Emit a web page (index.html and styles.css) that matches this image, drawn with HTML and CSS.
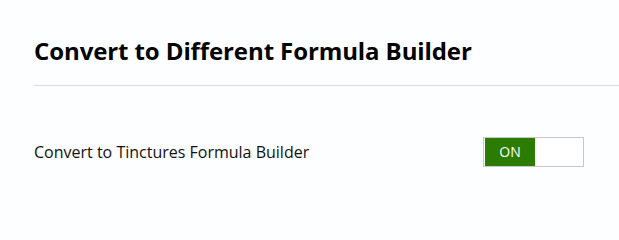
FILE: index.html
```html
<!DOCTYPE html>
<html>
<head>
<meta charset="utf-8">
<link rel="stylesheet" href="styles.css">
</head>
<body>
<div class="panel">
  <h2 class="title">Convert to Different Formula Builder</h2>
  <div class="divider"></div>
  <div class="row">
    <span class="label">Convert to Tinctures Formula Builder</span>
    <div class="toggle">
      <span class="toggle-on">ON</span>
      <span class="toggle-off"></span>
    </div>
  </div>
</div>
</body>
</html>
```
FILE: styles.css
```css
html, body {
  margin: 0;
  padding: 0;
  background: #fcfeff;
}
.panel {
  padding: 36px 0 0 34px;
  font-family: "Open Sans", "Noto Sans", sans-serif;
  color: #000;
}
.title {
  margin: 0;
  font-size: 24px;
  font-weight: 700;
  line-height: 30px;
  letter-spacing: -0.1px;
}
.divider {
  margin-top: 19px;
  height: 1px;
  background: #dcdde0;
}
.row {
  display: flex;
  align-items: center;
  justify-content: space-between;
  margin-top: 51px;
  padding-right: 35px;
}
.label {
  font-size: 16px;
  color: #111;
}
.toggle {
  display: flex;
  width: 99px;
  height: 28px;
  border: 1px solid #c8c8c8;
  background: #fff;
  padding: 0;
}
.toggle-on {
  width: 50px;
  margin: 0 0 0 1px;
  background: #2a7d02;
  color: #fff;
  font-size: 14px;
  line-height: 28px;
  text-align: center;
}
.toggle-off {
  flex: 1;
}
```
